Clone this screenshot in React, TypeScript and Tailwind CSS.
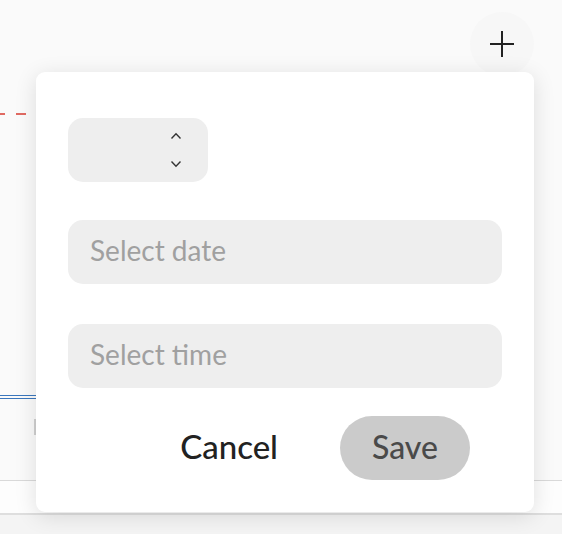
function Chevron({ up }: { up?: boolean }) {
  return (
    <svg width="12" height="8" viewBox="0 0 12 8" fill="none" stroke="#333" strokeWidth="1.4">
      {up ? <path d="M1.5 6.5 L6 1.8 L10.5 6.5" /> : <path d="M1.5 1.5 L6 6.2 L10.5 1.5" />}
    </svg>
  );
}

function PlusIcon() {
  return (
    <svg width="26" height="26" viewBox="0 0 26 26" fill="none" stroke="#222" strokeWidth="2">
      <path d="M13 0 V26 M1 13 H25" />
    </svg>
  );
}

export default function App() {
  return (
    <div
      className="relative w-[562px] h-[534px] overflow-hidden bg-[#fafafa]"
      style={{ fontFamily: "Lato, 'Noto Sans', sans-serif" }}
    >
      {/* page behind the popover */}
      <div className="flex flex-col">
        <div className="flex justify-end pt-[12px] pr-[28px]">
          <button className="w-[64px] h-[64px] rounded-full bg-[#f7f7f7] flex items-center justify-center">
            <PlusIcon />
          </button>
        </div>
        <div className="mt-[37px] flex gap-[11px]">
          <div className="w-[5px] h-[2px] bg-[#e06a62]" />
          <div className="w-[10px] h-[2px] bg-[#e06a62]" />
        </div>
        <div className="mt-[280px] w-[40px] h-[4px] border-y border-[#3b77bd]" />
        <div className="mt-[20px] ml-[34px] w-[3px] h-[16px] bg-[#d0d0d0]" />
        <div className="mt-[45px] h-px bg-[#d9d9d9]" />
        <div className="h-[32px] bg-[#fdfdfd]" />
        <div className="h-[2px] bg-[#dedede]" />
        <div className="h-[20px] bg-[#f4f4f4]" />
      </div>

      {/* popover */}
      <div className="absolute left-[36px] top-[72px] w-[498px] h-[440px] rounded-[9px] bg-white shadow-[0_4px_22px_rgba(0,0,0,0.12)] px-[32px] pt-[46px] flex flex-col">
        <div className="w-[140px] h-[64px] rounded-[15px] bg-[#eeeeee] flex flex-col items-end justify-center gap-[20px] pr-[26px]">
          <Chevron up />
          <Chevron />
        </div>
        <div className="mt-[38px] h-[64px] rounded-[15px] bg-[#eeeeee] flex items-center px-[22px] pb-[4px] text-[28px] text-[#a0a0a0]">
          Select date
        </div>
        <div className="mt-[40px] h-[64px] rounded-[15px] bg-[#eeeeee] flex items-center px-[22px] pb-[4px] text-[28px] text-[#a0a0a0]">
          Select time
        </div>
        <div className="mt-[28px] flex items-center justify-end gap-[62px] pr-[32px]">
          <button className="text-[33px] font-medium text-[#222] pb-[2px]">Cancel</button>
          <button className="w-[130px] h-[64px] rounded-full bg-[#cbcbcb] text-[32px] font-medium text-[#4a4a4a] pb-[2px]">
            Save
          </button>
        </div>
      </div>
    </div>
  );
}
